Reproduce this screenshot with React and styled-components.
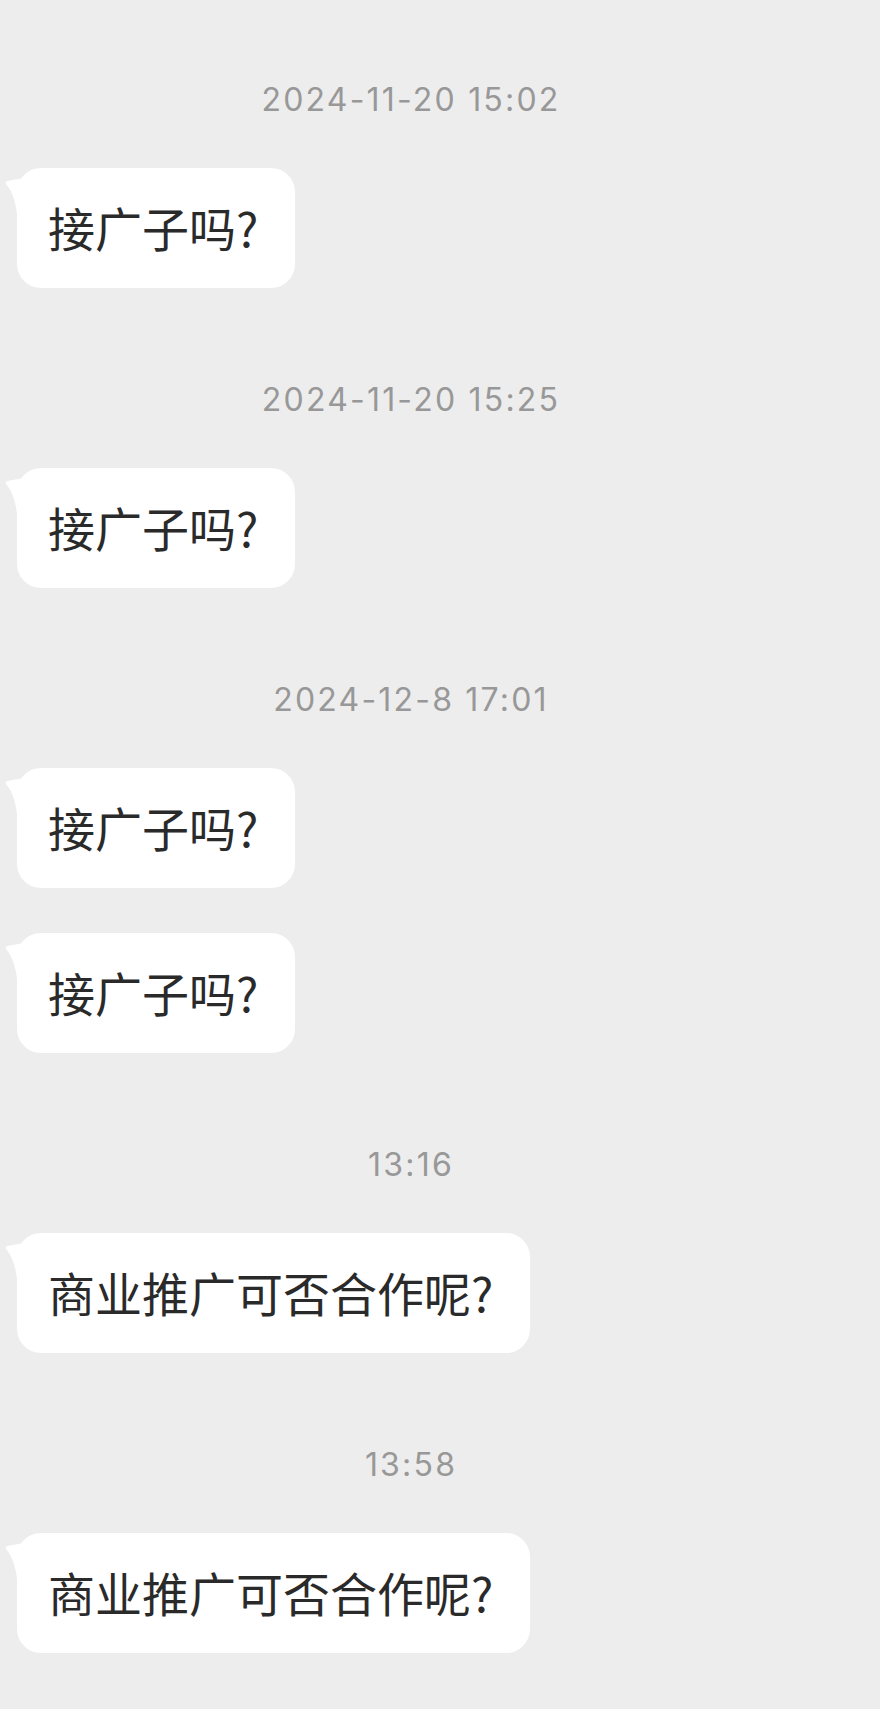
import React from "react";
import styled, { createGlobalStyle } from "styled-components";

const GlobalStyle = createGlobalStyle`
  html, body {
    margin: 0;
    padding: 0;
    background: #ededed;
  }
  body {
    font-family: "Noto Sans CJK SC", "Noto Sans", sans-serif;
  }
`;

const Page = styled.main`
  min-height: 1709px;
  box-sizing: border-box;
  padding: 80px 0 40px;
  display: flex;
  flex-direction: column;
  gap: 92px;
  background: #ededed;
`;

const Group = styled.section`
  display: flex;
  flex-direction: column;
  gap: 48px;
`;

const Timestamp = styled.div`
  height: 40px;
  line-height: 40px;
  padding-right: 58px;
  text-align: center;
  font-family: Inter, "Liberation Sans", sans-serif;
  font-size: 32px;
  color: #989898;
  letter-spacing: 2.2px;
`;

const MessageList = styled.div`
  display: flex;
  flex-direction: column;
  gap: 45px;
`;

const Row = styled.div`
  display: flex;
  padding-left: 17px;
`;

const Bubble = styled.div`
  position: relative;
  box-sizing: border-box;
  height: 120px;
  display: flex;
  align-items: center;
  padding: 0 37px 4px 31px;
  background: #ffffff;
  border-radius: 24px;
  font-family: "Noto Sans CJK SC", sans-serif;
  font-size: 47px;
  color: #2a2a2a;
  white-space: nowrap;
`;

const Tail = styled.svg`
  position: absolute;
  left: -12px;
  top: 8px;
  width: 20px;
  height: 40px;
`;

function BubbleTail() {
  return (
    <Tail viewBox="0 0 20 40" aria-hidden="true">
      <path
        d="M20 2 C13 3 6 4 2.5 5 C0.5 5.6 0.4 7.2 1.4 8.4 C7 15 10.5 25 12 38 L20 38 Z"
        fill="#ffffff"
      />
    </Tail>
  );
}

function Message({ text }) {
  return (
    <Row>
      <Bubble>
        <BubbleTail />
        {text}
      </Bubble>
    </Row>
  );
}

const groups = [
  { time: "2024-11-20 15:02", messages: ["接广子吗?"] },
  { time: "2024-11-20 15:25", messages: ["接广子吗?"] },
  { time: "2024-12-8 17:01", messages: ["接广子吗?", "接广子吗?"] },
  { time: "13:16", messages: ["商业推广可否合作呢?"] },
  { time: "13:58", messages: ["商业推广可否合作呢?"] },
];

export default function App() {
  return (
    <>
      <GlobalStyle />
      <Page>
        {groups.map((g, i) => (
          <Group key={i}>
            <Timestamp>{g.time}</Timestamp>
            <MessageList>
              {g.messages.map((m, j) => (
                <Message key={j} text={m} />
              ))}
            </MessageList>
          </Group>
        ))}
      </Page>
    </>
  );
}
